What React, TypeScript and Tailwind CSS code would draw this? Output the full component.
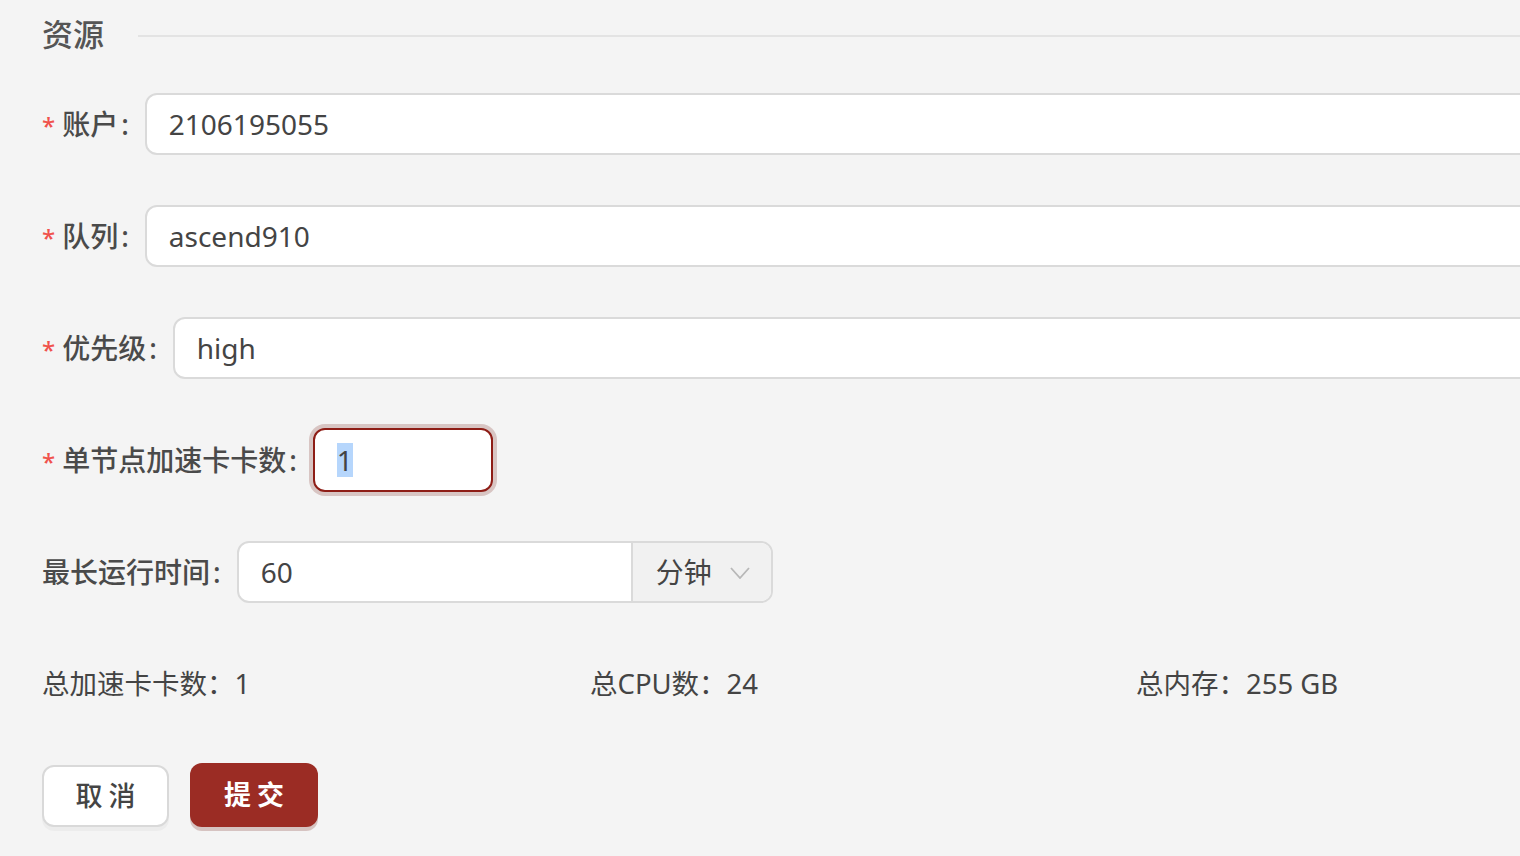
import React from "react";

const font = { fontFamily: '"Noto Sans", "Noto Sans CJK SC", sans-serif' };

function Label({ text, required = true }: { text: string; required?: boolean }) {
  return (
    <div className="flex items-center shrink-0 text-[28px] font-medium text-[#4a4a4a] mr-[16px]">
      {required && <span className="text-[#f0524c] text-[24px] mr-[7px] mt-[4px]">*</span>}
      <span>{text}</span>
      <span className="ml-[3px]">:</span>
    </div>
  );
}

function Chevron() {
  return (
    <svg width="20" height="12" viewBox="0 0 20 12" fill="none">
      <path d="M1 1 L10 11 L19 1" stroke="#b8b8b8" strokeWidth="1.8" />
    </svg>
  );
}

export default function App() {
  return (
    <div className="w-[1520px] h-[856px] overflow-hidden bg-[#f4f4f4] text-[#444]" style={font}>
      <div className="w-[1700px] pl-[42px] pt-[14px]">
        <div className="flex items-center h-[40px]">
          <div className="text-[31px] font-medium text-[#555] leading-none">资源</div>
          <div className="flex-1 h-[2px] bg-[#e3e3e3] ml-[34px] mt-[4px]" />
        </div>

        <div className="mt-[39px] flex flex-col gap-[50px]">
          <div className="flex items-center h-[62px]">
            <Label text="账户" />
            <div className="flex-1 h-[62px] bg-white border-2 border-[#dadada] rounded-[12px] flex items-center px-[22px] text-[28px] text-[#444]">
              2106195055
            </div>
          </div>

          <div className="flex items-center h-[62px]">
            <Label text="队列" />
            <div className="flex-1 h-[62px] bg-white border-2 border-[#dadada] rounded-[12px] flex items-center px-[22px] text-[28px] text-[#444]">
              ascend910
            </div>
          </div>

          <div className="flex items-center h-[62px]">
            <Label text="优先级" />
            <div className="flex-1 h-[62px] bg-white border-2 border-[#dadada] rounded-[12px] flex items-center px-[22px] text-[28px] text-[#444]">
              high
            </div>
          </div>

          <div className="flex items-center h-[62px]">
            <Label text="单节点加速卡卡数" />
            <div className="w-[180px] h-[64px] bg-white border-2 border-[#8e1d16] rounded-[12px] flex items-center px-[22px] text-[28px] text-[#444] shadow-[0_0_0_4px_#d8c5c3]">
              <span className="bg-[#b6d6fc] leading-[34px]">1</span>
            </div>
          </div>

          <div className="flex items-center h-[62px]">
            <Label text="最长运行时间" required={false} />
            <div className="w-[536px] h-[62px] bg-white border-2 border-[#dadada] rounded-[12px] flex overflow-hidden">
              <div className="w-[392px] flex items-center px-[22px] text-[28px] text-[#444]">60</div>
              <div className="flex-1 flex items-center border-l-2 border-[#dadada] bg-[#f1f1f1] pl-[23px] text-[28px] text-[#444]">
                <span>分钟</span>
                <span className="ml-[18px] mt-[2px]"><Chevron /></span>
              </div>
            </div>
          </div>

          <div className="grid grid-cols-[548px_546px_1fr] h-[62px] items-center text-[27.5px] text-[#444]">
            <div>总加速卡卡数：1</div>
            <div>总CPU数：24</div>
            <div>总内存：255 GB</div>
          </div>

          <div className="flex items-center gap-[21px] h-[62px]">
            <button className="w-[127px] h-[62px] bg-white border-2 border-[#d9d9d9] rounded-[12px] text-[27px] font-medium text-[#444] shadow-[0_4px_0_rgba(0,0,0,0.03)]">
              <span className="tracking-[6px] mr-[-6px]">取消</span>
            </button>
            <button className="w-[128px] h-[64px] bg-[#9b2c24] rounded-[12px] text-[27px] font-bold text-white shadow-[0_4px_0_#d6c3c1] mb-[2px]">
              <span className="tracking-[6px] mr-[-6px]">提交</span>
            </button>
          </div>
        </div>
      </div>
    </div>
  );
}
